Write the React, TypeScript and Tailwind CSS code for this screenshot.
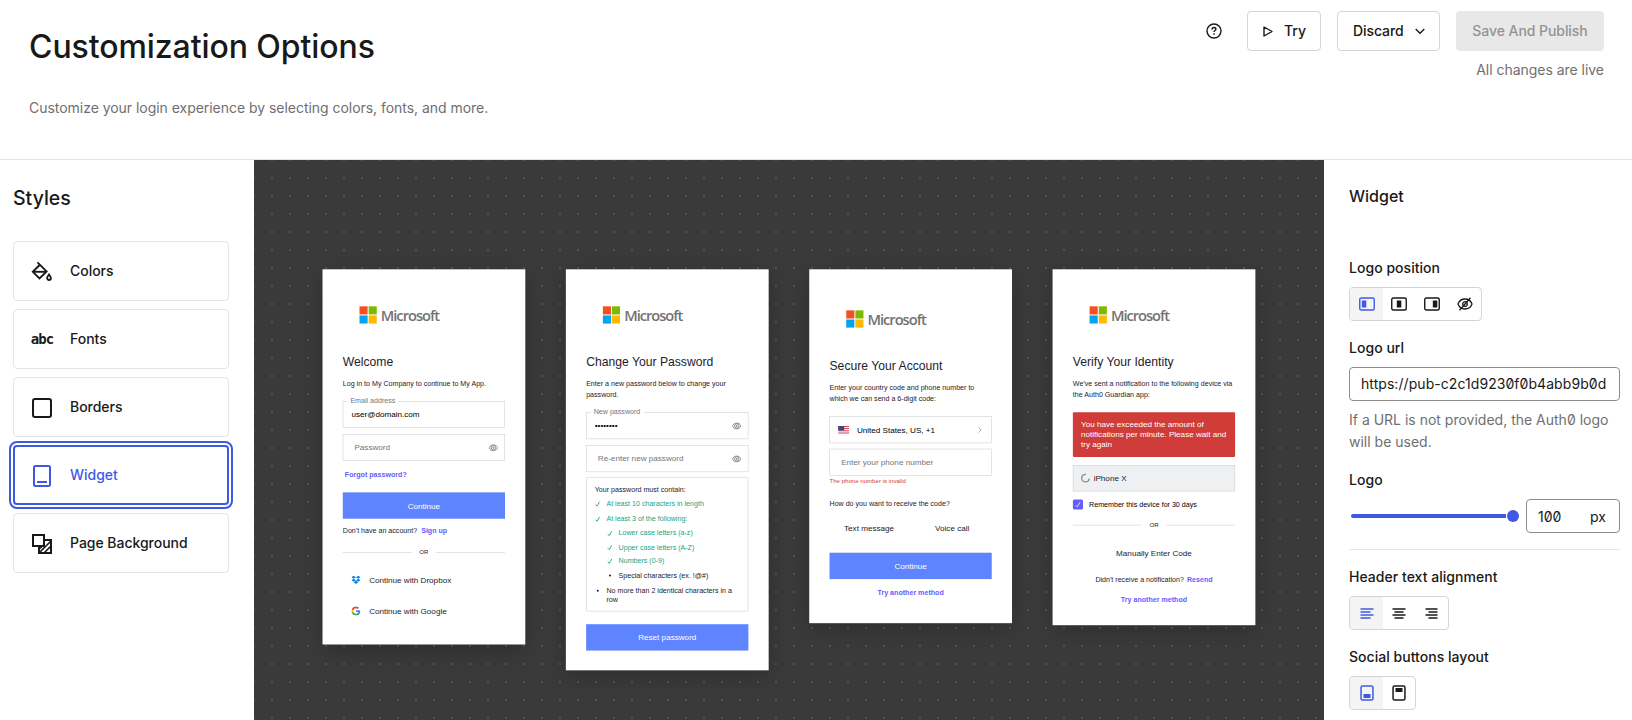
import React from "react";

const INTER = "font-['Inter',sans-serif]";

function MicrosoftLogo({ className = "mt-[73px]" }: { className?: string }) {
  return (
    <div className={`ml-[33px] flex h-[34px] shrink-0 items-center gap-[8px] ${className}`}>
      <div className="grid h-[34px] w-[34px] shrink-0 grid-cols-2 gap-[2px]">
        <div className="bg-[#f25022]" />
        <div className="bg-[#7fba00]" />
        <div className="bg-[#00a4ef]" />
        <div className="bg-[#ffb900]" />
      </div>
      <span className="whitespace-nowrap font-['Open_Sans',sans-serif] text-[29px] font-semibold leading-[34px] tracking-[-2.050px] text-[#737373]">
        Microsoft
      </span>
    </div>
  );
}

function Eye() {
  return (
    <svg className="h-[18px] w-[18px] shrink-0" viewBox="0 0 18 18" fill="none" stroke="#65676e" strokeWidth="1.400">
      <path d="M.7 9C2.200 5.200 5.200 3.400 9 3.400s6.800 1.800 8.300 5.600c-1.500 3.800-4.500 5.600-8.300 5.600S2.200 12.800.7 9z" />
      <circle cx="9" cy="9" r="4.400" />
      <circle cx="9" cy="9" r="1.300" />
    </svg>
  );
}

function Card({ className, children }: { className: string; children: React.ReactNode }) {
  return (
    <section
      className={`flex w-[400px] flex-col bg-white px-[40px] text-[14px] leading-[21px] text-[#1e212a] shadow-[0_12px_40px_rgba(0,0,0,0.22)] ${className}`}
    >
      {children}
    </section>
  );
}

function Title({ children }: { children: React.ReactNode }) {
  return <h3 className="mt-[60px] h-[30px] shrink-0 whitespace-nowrap text-[24px] leading-[30px]">{children}</h3>;
}

function Field({ label, value, placeholder, eye, className }: { label?: string; value?: string; placeholder?: string; eye?: boolean; className: string }) {
  return (
    <div
      className={`relative flex h-[53px] shrink-0 items-center justify-between border border-[#c9cace] pr-[13px] text-[16px] ${
        value ? "pl-[16px]" : "pl-[22px]"
      } ${className}`}
    >
      {label && (
        <span className="absolute left-[8px] top-[-12px] bg-white px-[6px] text-[14px] leading-[21px] text-[#6f7780]">{label}</span>
      )}
      {value ? <span className="text-black">{value}</span> : <span className="text-[#6f7780]">{placeholder}</span>}
      {eye && <Eye />}
    </div>
  );
}

function Primary({ className, children }: { className: string; children: React.ReactNode }) {
  return (
    <div className={`flex h-[52px] shrink-0 items-center justify-center bg-[#5e85ff] text-[16px] text-white ${className}`}>
      {children}
    </div>
  );
}

function Or({ className }: { className: string }) {
  return (
    <div className={`flex h-[20px] shrink-0 items-center gap-[15px] text-[12px] ${className}`}>
      <div className="h-[1px] flex-1 bg-[#c9cace]" />
      <span>OR</span>
      <div className="h-[1px] flex-1 bg-[#c9cace]" />
    </div>
  );
}

const LINK = "font-bold text-[#635dff]";

function Tick() {
  return (
    <svg className="h-[12px] w-[12px] shrink-0" viewBox="0 0 12 12" fill="none" stroke="#13a688" strokeWidth="1.800">
      <path d="M1.500 7 4.500 10 9.500 1.500" />
    </svg>
  );
}

function Bullet() {
  return (
    <span className="flex w-[12px] shrink-0 justify-center">
      <span className="h-[4px] w-[4px] rounded-full bg-[#1e212a]" />
    </span>
  );
}

function Rule({ ok, nested, className = "", children }: { ok?: boolean; nested?: boolean; className?: string; children: React.ReactNode }) {
  return (
    <li
      className={`flex h-[21px] shrink-0 items-center gap-[11px] whitespace-nowrap ${ok ? "text-[#13a688]" : ""} ${
        nested ? "ml-[24px]" : ""
      } ${className}`}
    >
      {ok ? <Tick /> : <Bullet />}
      {children}
    </li>
  );
}

function LoginCard() {
  return (
    <Card className="h-[740px]">
      <MicrosoftLogo />
      <Title>Welcome</Title>
      <p className="mt-[18px]">Log in to My Company to continue to My App.</p>
      <Field className="mt-[24px]" label="Email address" value="user@domain.com" />
      <Field className="mt-[12px]" placeholder="Password" eye />
      <p className={`ml-[4px] mt-[16px] ${LINK}`}>Forgot password?</p>
      <Primary className="mt-[25px]">Continue</Primary>
      <p className="mt-[14px]">
        Don't have an account? <span className={`ml-[4px] ${LINK}`}>Sign up</span>
      </p>
      <Or className="mt-[21px]" />
      <div className="mt-[35px] flex h-[20px] shrink-0 items-center gap-[17px] pl-[17px] text-[16px]">
        <svg className="h-[18px] w-[18px]" viewBox="0 0 18 17" fill="#0a84e8">
          <path d="M4.500 0 9 3 4.500 6 0 3zM13.500 0 18 3l-4.500 3L9 3zM0 9l4.500-3L9 9l-4.500 3zM13.500 6 18 9l-4.500 3L9 9zM4.500 13 9 10l4.500 3L9 16z" />
        </svg>
        <span>Continue with Dropbox</span>
      </div>
      <div className="mt-[41px] flex h-[20px] shrink-0 items-center gap-[17px] pl-[17px] text-[16px]">
        <svg className="h-[18px] w-[18px]" viewBox="0 0 18 18">
          <path fill="#4285f4" d="M17.640 9.200c0-.64-.06-1.250-.16-1.840H9v3.480h4.840a4.140 4.140 0 0 1-1.800 2.720v2.260h2.910c1.700-1.570 2.690-3.880 2.690-6.620z" />
          <path fill="#34a853" d="M9 18c2.430 0 4.470-.8 5.960-2.180l-2.910-2.260c-.8.540-1.840.86-3.050.86-2.340 0-4.330-1.580-5.040-3.710H.96v2.330A9 9 0 0 0 9 18z" />
          <path fill="#fbbc05" d="M3.960 10.710a5.400 5.400 0 0 1 0-3.420V4.960H.96a9 9 0 0 0 0 8.080z" />
          <path fill="#ea4335" d="M9 3.580c1.320 0 2.510.45 3.440 1.350l2.580-2.590A9 9 0 0 0 .96 4.960l3 2.330C4.670 5.160 6.660 3.580 9 3.580z" />
        </svg>
        <span>Continue with Google</span>
      </div>
    </Card>
  );
}

function PasswordCard() {
  return (
    <Card className="h-[791px]">
      <MicrosoftLogo />
      <Title>Change Your Password</Title>
      <p className="mt-[18px]">Enter a new password below to change your password.</p>
      <Field className="mt-[25px]" label="New password" value="••••••••" eye />
      <Field className="mt-[12px]" placeholder="Re-enter new password" eye />
      <div className="mt-[10px] flex h-[265px] shrink-0 flex-col rounded-[3px] border border-[#c9cace] pl-[16px] pt-[13px]">
        <p>Your password must contain:</p>
        <ul className="flex flex-col">
          <Rule ok className="mt-[7px]">At least 10 characters in length</Rule>
          <Rule ok className="mt-[9px]">At least 3 of the following:</Rule>
          <Rule ok nested className="mt-[7px]">Lower case letters (a-z)</Rule>
          <Rule ok nested className="mt-[7px]">Upper case letters (A-Z)</Rule>
          <Rule ok nested className="mt-[6px]">Numbers (0-9)</Rule>
          <Rule nested className="mt-[7px]">Special characters (ex. !@#)</Rule>
          <Rule className="mt-[9px]">No more than 2 identical characters in a</Rule>
          <li className="-mt-[2px] ml-[23px]">row</li>
        </ul>
      </div>
      <Primary className="mt-[25px]">Reset password</Primary>
    </Card>
  );
}

function PhoneCard() {
  return (
    <Card className="h-[698px]">
      <MicrosoftLogo className="mt-[81px]" />
      <Title>Secure Your Account</Title>
      <p className="mt-[18px]">Enter your country code and phone number to which we can send a 6-digit code:</p>
      <div className="mt-[25px] flex h-[53px] shrink-0 items-center border border-[#c9cace] pl-[16px] pr-[17px] text-[16px] text-black">
        <svg className="h-[16px] w-[22px]" viewBox="0 0 22 16">
          <rect width="22" height="16" fill="#f3f0f2" />
          <path d="M0 1h22M0 5h22M0 9.500h22M0 14h22" stroke="#d8505c" strokeWidth="2" />
          <rect width="12" height="9" fill="#3c4a78" />
        </svg>
        <span className="ml-[15px] flex-1">United States, US, +1</span>
        <svg className="h-[12px] w-[10px]" viewBox="0 0 10 12" fill="none" stroke="#8b8f96" strokeWidth="1.500">
          <path d="m2 1 5 5-5 5" />
        </svg>
      </div>
      <Field className="mt-[11px]" placeholder="Enter your phone number" />
      <p className="mt-[1px] h-[20px] text-[12px] leading-[20px] text-[#d03c38]">The phone number is invalid</p>
      <p className="mt-[23px]">How do you want to receive the code?</p>
      <div className="mt-[28px] grid h-[21px] shrink-0 grid-cols-2 gap-[8px] text-center text-[16px]">
        <span>Text message</span>
        <span>Voice call</span>
      </div>
      <Primary className="mt-[38px]">Continue</Primary>
      <p className={`mt-[17px] text-center ${LINK}`}>Try another method</p>
    </Card>
  );
}

function VerifyCard() {
  return (
    <Card className="h-[702px]">
      <MicrosoftLogo />
      <Title>Verify Your Identity</Title>
      <p className="mt-[18px]">We've sent a notification to the following device via the Auth0 Guardian app:</p>
      <div className="mt-[25px] h-[88px] shrink-0 rounded-[2px] bg-[#d03c38] px-[16px] pt-[14px] text-[16px] leading-[20px] text-white">
        You have exceeded the amount of notifications per minute. Please wait and try again
      </div>
      <div className="mt-[16px] flex h-[52px] shrink-0 items-center gap-[7px] border border-[#c9cace] bg-[#eff0f2] pl-[15px] text-[16px]">
        <svg className="h-[18px] w-[18px]" viewBox="0 0 18 18" fill="none" stroke="#84888f" strokeWidth="2.600">
          <path d="M10 1.500A7.500 7.500 0 1 0 16.400 10" />
        </svg>
        iPhone X
      </div>
      <div className="mt-[15px] flex h-[21px] shrink-0 items-center gap-[12px] text-black">
        <span className="flex h-[20px] w-[20px] items-center justify-center rounded-[3px] bg-[#635dff]">
          <svg className="h-[12px] w-[12px]" viewBox="0 0 12 12" fill="none" stroke="white" strokeWidth="1.500">
            <path d="M1.500 7.500 4.500 10.500 10.500 1" />
          </svg>
        </span>
        Remember this device for 30 days
      </div>
      <Or className="mt-[20px]" />
      <p className="mt-[36px] text-center text-[16px]">Manually Enter Code</p>
      <p className="mt-[30px] text-center">
        Didn't receive a notification? <span className={`ml-[2px] ${LINK}`}>Resend</span>
      </p>
      <p className={`mt-[19px] text-center ${LINK}`}>Try another method</p>
    </Card>
  );
}

function NavItem({ icon, label, active }: { icon: React.ReactNode; label: string; active?: boolean }) {
  return (
    <li
      className={`flex h-[60px] items-center rounded-[4px] text-[14px] font-medium ${
        active
          ? "border-2 border-[#3f59e4] pl-[15px] text-[#3f59e4] outline-2 outline-offset-2 outline-[#3f59e4]"
          : "border border-[#e5e5e5] pl-[16px] text-[#191919]"
      }`}
    >
      <span className="flex w-[24px] justify-center pt-[2px]">{icon}</span>
      <span className="-mt-[2px] ml-[16px] tracking-[-0.030px]">{label}</span>
    </li>
  );
}

function Segments({ icons, className }: { icons: React.ReactNode[]; className: string }) {
  return (
    <div className={`flex h-[34px] self-start overflow-hidden rounded-[4px] border border-[#d4d4d4] ${className}`}>
      {icons.map((icon, i) => (
        <span
          key={i}
          className={`flex h-full items-center justify-center ${i === 0 ? "w-[33px] shrink-0 bg-[#f4f4f4] pl-px text-[#3f59e4]" : "flex-1 text-[#191919]"}`}
        >
          {icon}
        </span>
      ))}
    </div>
  );
}

function PositionIcon({ x }: { x: number }) {
  return (
    <svg width="16" height="14" viewBox="0 0 16 14" fill="none" stroke="currentColor" strokeWidth="1.400">
      <rect x="0.750" y="0.950" width="14.500" height="12.100" rx="1.500" />
      <rect x={x} y="3.500" width="4.500" height="7" fill="currentColor" stroke="none" />
    </svg>
  );
}

function AlignIcon({ d }: { d: string }) {
  return (
    <svg width="14" height="12" viewBox="0 0 14 12" fill="none" stroke="currentColor" strokeWidth="1.500">
      <path d={d} />
    </svg>
  );
}

function LayoutIcon({ y }: { y: number }) {
  return (
    <svg width="14" height="16" viewBox="0 0 14 16" fill="none" stroke="currentColor" strokeWidth="1.500">
      <rect x="1.050" y="0.950" width="11.900" height="14.100" rx="1.500" />
      <rect x="3.500" y={y} width="7" height="4" fill="currentColor" stroke="none" />
    </svg>
  );
}

const LABEL = "text-[14px] font-medium leading-[20px] tracking-[0.030px] text-[#191919]";

export default function App() {
  return (
    <div className={`flex h-[720px] w-[1632px] flex-col overflow-hidden bg-white ${INTER}`}>
      <header className="flex h-[160px] shrink-0 justify-between border-b border-[#e5e5e5] pl-[29px] pr-[28px]">
        <div>
          <h1 className="mt-[27px] text-[32px] font-medium leading-[40px] tracking-[-0.080px] text-[#191919]">Customization Options</h1>
          <p className="mt-[31px] text-[14px] leading-[20px] tracking-[-0.035px] text-[#6f6f6f]">
            Customize your login experience by selecting colors, fonts, and more.
          </p>
        </div>
        <div className="flex flex-col items-end pt-[11px] text-[14px] font-medium text-[#191919]">
          <div className="flex h-[40px] items-center gap-[16px]">
            <svg className="mr-[9px]" width="16" height="16" viewBox="0 0 16 16" fill="none" stroke="currentColor" strokeWidth="1.400">
              <circle cx="8" cy="8" r="7" />
              <path d="M6.100 6.400C6.100 5.200 6.900 4.500 8 4.500s1.900.7 1.900 1.700C9.900 7.500 8 7.600 8 9" />
              <path d="M8 10.300v1.500" />
            </svg>
            <button className="flex h-[40px] w-[74px] items-center rounded-[4px] border border-[#d4d4d4] pl-[15px]">
              <svg width="10" height="11" viewBox="0 0 10 11" fill="none" stroke="currentColor" strokeWidth="1.400" strokeLinejoin="round">
                <path d="M1 1v9l8-4.500z" />
              </svg>
              <span className="-mt-[2px] ml-[11px]">Try</span>
            </button>
            <button className="flex h-[40px] w-[103px] items-center rounded-[4px] border border-[#d4d4d4] pl-[15px]">
              <span className="-mt-[2px] w-[51px] text-left tracking-[-0.080px]">Discard</span>
              <svg className="ml-[11px] mt-[1px]" width="10" height="7" viewBox="0 0 10 7" fill="none" stroke="currentColor" strokeWidth="1.400">
                <path d="m.7 1 4.300 4.300L9.300 1" />
              </svg>
            </button>
            <button className="flex h-[40px] w-[148px] items-center justify-center rounded-[4px] bg-[#e8e8e8] pb-[2px] tracking-[-0.060px] text-[#939393]">
              Save And Publish
            </button>
          </div>
          <p className="mt-[9px] font-normal leading-[20px] tracking-[-0.030px] text-[#6f6f6f]">All changes are live</p>
        </div>
      </header>

      <div className="flex min-h-0 flex-1">
        <aside className="w-[254px] shrink-0 pl-[13px] pr-[25px]">
          <h2 className="mt-[24px] text-[19.500px] font-medium leading-[28px] text-[#191919]">Styles</h2>
          <ul className="mt-[29px] flex flex-col gap-[8px]">
            <NavItem
              label="Colors"
              icon={
                <svg width="22" height="22" viewBox="0 0 22 22" fill="none" stroke="currentColor" strokeWidth="1.900">
                  <path d="M6.500 1.300 15.600 10.400 8.500 17.500 1.800 10.800 8.600 4" />
                  <path d="M2 10.800h13" />
                  <path d="M18 13.500c1.300 1.700 1.900 2.600 1.900 3.600a1.900 1.900 0 0 1-3.800 0c0-1 .6-1.900 1.900-3.600z" />
                </svg>
              }
            />
            <NavItem
              label="Fonts"
              icon={
                <span className="-mt-[3px] font-['DejaVu_Sans_Mono',monospace] text-[14px] font-bold leading-[20px] tracking-[-0.900px]">abc</span>
              }
            />
            <NavItem
              label="Borders"
              icon={
                <svg width="20" height="20" viewBox="0 0 20 20" fill="none" stroke="currentColor" strokeWidth="2">
                  <rect x="1" y="1" width="18" height="18" rx="2" />
                </svg>
              }
            />
            <NavItem
              active
              label="Widget"
              icon={
                <svg width="18" height="22" viewBox="0 0 18 22" fill="none" stroke="currentColor" strokeWidth="2">
                  <rect x="1" y="1" width="16" height="20" rx="1.500" />
                  <path d="M4 17h10" />
                </svg>
              }
            />
            <NavItem
              label="Page Background"
              icon={
                <svg width="20" height="20" viewBox="0 0 20 20" fill="none" stroke="currentColor" strokeWidth="2">
                  <path d="M1 1h11v11H1z" />
                  <path d="M12 6h7v13H7v-7" />
                  <path d="M7.500 18.500 18.500 7.500M8 14.500l3.500-3.500M12 19l7-7" strokeWidth="1.600" />
                </svg>
              }
            />
          </ul>
        </aside>

        <main className="flex w-[1070px] shrink-0 items-start overflow-hidden bg-[#3a3a3a] bg-[radial-gradient(#525252_1px,transparent_1px)] bg-[size:18px_18px] bg-[position:-9px_-9px] pl-[68px] pt-[109px]">
          <div className="flex w-[1840px] shrink-0 origin-top-left translate-x-[0.5px] translate-y-[0.3px] scale-[0.507] items-start gap-[80px] font-['Liberation_Sans',sans-serif]">
            <LoginCard />
            <PasswordCard />
            <PhoneCard />
            <VerifyCard />
          </div>
        </main>

        <aside className="flex w-[308px] shrink-0 flex-col pl-[25px] pr-[12px]">
          <h2 className="mt-[26px] text-[16px] font-medium leading-[20px] text-[#191919]">Widget</h2>
          <h3 className={`mt-[52px] ${LABEL}`}>Logo position</h3>
          <Segments
            className="mt-[9px] w-[133px]"
            icons={[
              <PositionIcon key="l" x={2.8} />,
              <PositionIcon key="c" x={5.8} />,
              <PositionIcon key="r" x={8.800} />,
              <svg key="h" width="16" height="14" viewBox="0 0 16 14" fill="none" stroke="currentColor" strokeWidth="1.300">
                <path d="M1 7c1.200-3.200 3.800-5 7-5s5.800 1.800 7 5c-1.200 3.200-3.800 5-7 5S2.200 10.200 1 7z" />
                <circle cx="8" cy="7" r="2.300" />
                <path d="M13.500.8 2.500 13.200" />
              </svg>,
            ]}
          />
          <h3 className={`mt-[17px] ${LABEL}`}>Logo url</h3>
          <div className="mt-[9px] flex h-[34px] items-center rounded-[4px] border border-[#8c8c8c] pl-[11px] pr-[12px]">
            <input
              readOnly
              className="w-full text-[14px] leading-[20px] tracking-[0.060px] text-[#191919] outline-none [font-feature-settings:'zero']"
              value="https://pub-c2c1d9230f0b4abb9b0d2"
            />
          </div>
          <p className="mt-[8px] text-[14px] leading-[22px] text-[#6f6f6f] [font-feature-settings:'zero']">
            If a URL is not provided, the Auth0 logo will be used.
          </p>
          <h3 className={`mt-[17px] ${LABEL}`}>Logo</h3>
          <div className="mt-[9px] flex h-[34px] items-center">
            <div className="ml-[2px] h-[4px] w-[155px] rounded-l-full bg-[#3f59e4]" />
            <div className="ml-[1px] h-[12px] w-[12px] rounded-full bg-[#3f59e4]" />
            <div className="ml-auto flex h-[34px] w-[94px] items-center justify-between rounded-[4px] border border-[#8c8c8c] pl-[11px] pr-[13px] text-[14px] text-[#191919] [font-feature-settings:'zero']">
              <span>100</span>
              <span>px</span>
            </div>
          </div>
          <div className="mt-[16px] h-[1px] shrink-0 bg-[#e5e5e5]" />
          <h3 className={`mt-[17px] ${LABEL}`}>Header text alignment</h3>
          <Segments
            className="mt-[9px] w-[100px]"
            icons={[
              <AlignIcon key="l" d="M.5 2h13M.5 5h10M.5 8h13M.5 11h10" />,
              <AlignIcon key="c" d="M.5 2h13M2.500 5h9M.5 8h13M2.500 11h9" />,
              <AlignIcon key="r" d="M.5 2h12M3.500 5h9M.5 8h12M3.500 11h9" />,
            ]}
          />
          <h3 className={`mt-[17px] ${LABEL}`}>Social buttons layout</h3>
          <Segments className="mt-[9px] w-[67px]" icons={[<LayoutIcon key="b" y={9} />, <LayoutIcon key="t" y={3} />]} />
        </aside>
      </div>
    </div>
  );
}
